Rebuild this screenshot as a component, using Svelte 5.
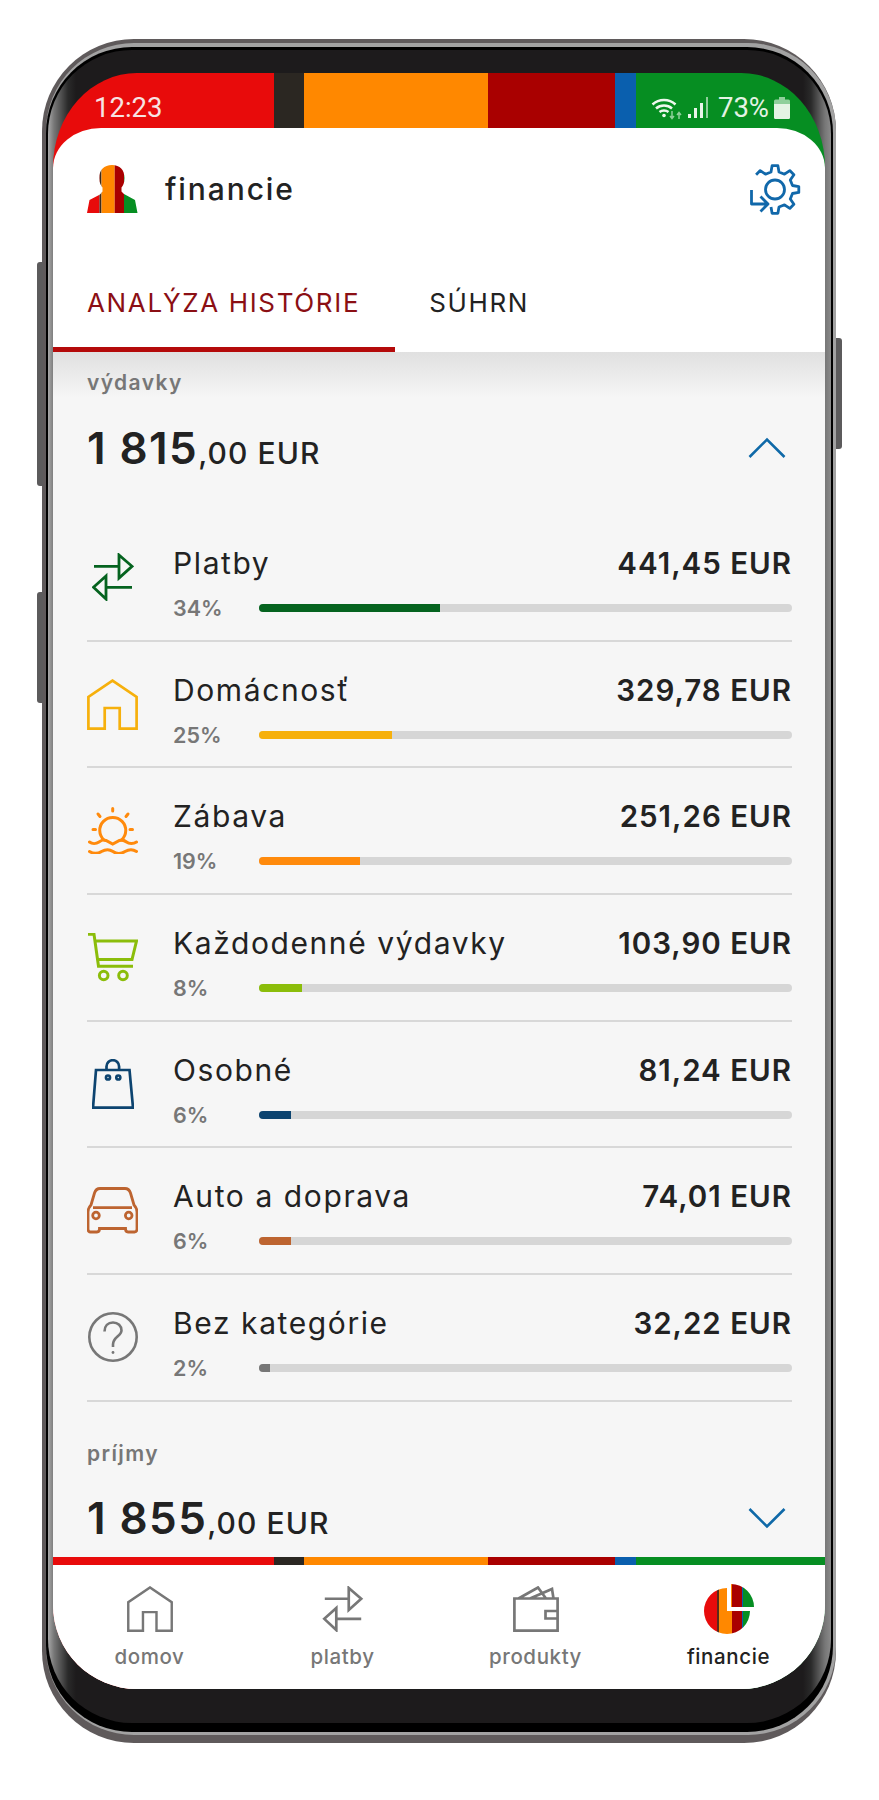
<script>
  // category rows, percent drives the bar width
  const rows = [
    { icon: 'transfer', name: 'Platby', amount: '441,45 EUR', pct: 34, color: '#05631f' },
    { icon: 'house', name: 'Domácnosť', amount: '329,78 EUR', pct: 25, color: '#f6b00c' },
    { icon: 'sun', name: 'Zábava', amount: '251,26 EUR', pct: 19, color: '#ff8a0c' },
    { icon: 'cart', name: 'Každodenné výdavky', amount: '103,90 EUR', pct: 8, color: '#8bbd0a' },
    { icon: 'bag', name: 'Osobné', amount: '81,24 EUR', pct: 6, color: '#0d4470' },
    { icon: 'car', name: 'Auto a doprava', amount: '74,01 EUR', pct: 6, color: '#bd6430' },
    { icon: 'help', name: 'Bez kategórie', amount: '32,22 EUR', pct: 2, color: '#777777' }
  ];

  const nav = [
    { icon: 'house', label: 'domov' },
    { icon: 'transfer', label: 'platby' },
    { icon: 'wallet', label: 'produkty' },
    { icon: 'pie', label: 'financie', active: true }
  ];

  // gear outline: 8 teeth, left lower part left open for the arrow
  function gearPath(cx, cy, rIn, rOut) {
    const pt = (deg, r) => {
      const a = (deg * Math.PI) / 180;
      return (cx + r * Math.sin(a)).toFixed(1) + ' ' + (cy - r * Math.cos(a)).toFixed(1);
    };
    const pts = [];
    for (let k = 7; k <= 12; k++) {
      const a = k * 45;
      pts.push(pt(a - 13, rIn), pt(a - 7, rOut), pt(a + 7, rOut), pt(a + 13, rIn));
    }
    pts.shift();
    return 'M' + pts.join('L');
  }
  const gear = gearPath(25, 25.5, 18, 24);
</script>

{#snippet icon(name)}
  {#if name === 'transfer'}
    <svg viewBox="0 0 42 48" width="42" height="48" fill="none" stroke="currentColor" stroke-width="2.8">
      <path d="M2 13.3H27M27 2L40 13.3 27 25ZM40 34.3H14M14 23L1.5 34.3 14 46Z" />
    </svg>
  {:else if name === 'house'}
    <svg viewBox="0 0 51 51" width="51" height="51" fill="none" stroke="currentColor" stroke-width="2.7">
      <path d="M17.7 49.7H1.4V18L25.5 1.6 49.6 18V49.7H32.7V29H17.7Z" />
    </svg>
  {:else if name === 'sun'}
    <svg viewBox="0 0 50 47" width="50" height="47" fill="none" stroke="currentColor" stroke-width="3" stroke-linecap="round">
      <path d="M16 33A13 13 0 1 1 33.5 33M24.7 1.5V4M10 7L12 9.5M40 7L38 9.5M5 22.5H7.5M42 22.5H44.5" />
      <path d="M1.5 35C4 37 8 37 11 35S15 32.5 18 33.5L24.7 37 31.5 33.5C34.5 32.5 36 33 38.5 35S45.5 37 48.5 35" />
      <path d="M1.5 44.5c4 2.4 8 2.4 12 0s8-2.4 11.5 0 8 2.4 12 0 8-2.4 11.5 0" />
    </svg>
  {:else if name === 'cart'}
    <svg viewBox="0 0 50 49" width="50" height="49" fill="none" stroke="currentColor" stroke-width="3">
      <path d="M0 1.3H6L10.5 33.3H45M6.8 8H48.5L44 26.5H9.5" />
      <circle cx="15.7" cy="42.5" r="4.3" />
      <circle cx="35" cy="42.5" r="4.3" />
    </svg>
  {:else if name === 'bag'}
    <svg viewBox="0 0 42 50" width="42" height="50" fill="none" stroke="currentColor" stroke-width="2.7">
      <path d="M4 11H37.5L41 48.7H1ZM14.5 11V7.5a6.3 6.3 0 0 1 12.6 0V11" />
      <circle cx="16" cy="18.5" r="2" />
      <circle cx="26.3" cy="18.5" r="2" />
    </svg>
  {:else if name === 'car'}
    <svg viewBox="0 0 51 47" width="51" height="47" fill="none" stroke="currentColor" stroke-width="2.8">
      <path d="M13 1.5H38C41 1.5 42.5 3 43.5 6L47 18C49 20 50 22 50 25V42C50 44 49 45 47.5 45H41C39.5 45 38.5 44 38.5 41.5H12.5C12.5 44 11.5 45 10 45H3.5C2 45 1 44 1 42V25C1 22 2 20 4 18L7.5 6C8.5 3 10 1.5 13 1.5ZM6 20.7H45" />
      <circle cx="9" cy="28.5" r="3.3" />
      <circle cx="41.7" cy="28.5" r="3.3" />
    </svg>
  {:else if name === 'help'}
    <svg viewBox="0 0 50 50" width="50" height="50" fill="none" stroke="currentColor" stroke-width="2.6">
      <circle cx="25" cy="25" r="23.7" />
      <path d="M16.5 19.5C16.5 14 20 10.5 25 10.5S33.5 14 33.5 18.5C33.5 24 25 25 25 32.5V35" />
      <circle cx="25" cy="40.5" r="1.4" fill="currentColor" stroke="none" />
    </svg>
  {:else if name === 'wallet'}
    <svg viewBox="0 0 46 46" width="46" height="46" fill="none" stroke="currentColor" stroke-width="2.7">
      <path d="M1.4 12.5H44.6V44.6H1.4ZM5.5 12.5L25 1.5 33 12.5M17 12.5L39 3 40.5 12.5M45 25H32.5V32.5H45" />
    </svg>
  {:else if name === 'pie'}
    <svg viewBox="0 0 50 50" width="50" height="50">
      <defs>
        <clipPath id="pieclip">
          <path d="M23 27V4A23 23 0 1 0 46 27ZM27 23V0A23 23 0 0 1 50 23Z" />
        </clipPath>
      </defs>
      <g clip-path="url(#pieclip)">
        <rect x="0" y="0" width="13" height="50" fill="#e80b0b" />
        <rect x="13" y="0" width="2" height="50" fill="#5b2a1a" />
        <rect x="15" y="0" width="13" height="50" fill="#ff8800" />
        <rect x="28" y="0" width="10" height="50" fill="#a90000" />
        <rect x="38" y="0" width="1" height="50" fill="#0a5fae" />
        <rect x="39" y="0" width="11" height="50" fill="#068e22" />
      </g>
    </svg>
  {/if}
{/snippet}

{#snippet total(big, rest, up)}
  <div class="total">
    <div><span class="big">{big}</span><span class="rest">{rest}</span></div>
    <svg class="chev" viewBox="0 0 38 22" width="38" height="22" fill="none" stroke="#0f69a8" stroke-width="2.6">
      {#if up}
        <path d="M1.5 20L19 2.5 36.5 20" />
      {:else}
        <path d="M1.5 2L19 19.5 36.5 2" />
      {/if}
    </svg>
  </div>
{/snippet}

<div class="page">
  <div class="phone">
    <span class="side left1"></span>
    <span class="side left2"></span>
    <span class="side right1"></span>
    <div class="rim">
      <div class="blackline">
        <div class="bezel">
          <div class="screen stripes">
            <div class="status">
              <span class="time">12:23</span>
              <span class="status-right">
                <svg viewBox="0 0 32 24" width="32" height="24" fill="none" stroke="#eef8ee" stroke-width="2.5">
                  <path d="M1.5 8.5C8 2.5 18 2.5 24.5 8.5M5 12.5C9.5 8.5 16.5 8.5 21 12.5M8.5 16C11 14 15 14 17.5 16" />
                  <circle cx="13" cy="19.5" r="1.8" fill="#eef8ee" stroke="none" />
                  <path d="M21 15V22M19 20L21 22.5 23 20" stroke="#8fcf9b" stroke-width="1.5" />
                  <path d="M28 23V17M26 19L28 16.5 30 19" stroke="#8fcf9b" stroke-width="1.5" />
                </svg>
                <svg class="signal" viewBox="0 0 20 22" width="20" height="22" fill="#e9f5e9">
                  <rect x="0" y="17" width="3" height="4" />
                  <rect x="6" y="11" width="3" height="10" />
                  <rect x="12" y="6" width="3" height="15" />
                  <rect x="18" y="0" width="2" height="21" fill="#8fcf9b" />
                </svg>
                <span class="batt-text">73%</span>
                <svg viewBox="0 0 16 22" width="16" height="22">
                  <path d="M5 0H11V2.5H14.5Q16 2.5 16 4V7H0V4Q0 2.5 1.5 2.5H5Z" fill="#8fcf9b" />
                  <path d="M0 7H16V20.5Q16 22 14.5 22H1.5Q0 22 0 20.5Z" fill="#e4f3e4" />
                </svg>
              </span>
            </div>

            <div class="card">
              <header class="brand">
                <div class="brand-left">
                  <svg viewBox="0 0 51 48" width="51" height="48">
                    <defs>
                      <clipPath id="person">
                        <path d="M25 0C33 0 37.5 5 37.5 13 37.5 18 36 21 34.5 22.5V26.5L37 29 48 35 50.5 48H0L2.5 35 13 29.5 15.5 26.5V22.5C14 21 12.3 18 12.3 13 12.3 5 17 0 25 0Z" />
                      </clipPath>
                    </defs>
                    <g clip-path="url(#person)">
                      <rect x="0" y="0" width="12.5" height="48" fill="#e80b0b" />
                      <rect x="12.5" y="0" width="2" height="48" fill="#3b2a1c" />
                      <rect x="14.5" y="0" width="13.2" height="48" fill="#ff8800" />
                      <rect x="27.7" y="0" width="9.3" height="48" fill="#a90000" />
                      <rect x="37" y="0" width="14" height="48" fill="#068e22" />
                    </g>
                  </svg>
                  <span class="title">financie</span>
                </div>
                <svg class="gear" viewBox="0 0 51 51" width="51" height="51" fill="none" stroke="#1168aa" stroke-width="2.8" stroke-linejoin="round">
                  <path d={gear} />
                  <circle cx="25" cy="25.5" r="9.5" />
                  <path d="M1.5 26V40H18M10.5 32.5L18 40 10.5 47.5" />
                </svg>
              </header>

              <nav class="tabs">
                <div class="tab active">ANALÝZA HISTÓRIE</div>
                <div class="tab">SÚHRN</div>
              </nav>

              <main class="content">
                <section class="sum first">
                  <div class="sum-label">výdavky</div>
                  {@render total('1 815', ',00 EUR', true)}
                </section>

                {#each rows as row}
                  <div class="row">
                    <div class="row-icon" style="color: {row.color}">{@render icon(row.icon)}</div>
                    <div class="row-body">
                      <div class="row-top">
                        <span class="name">{row.name}</span>
                        <span class="amount">{row.amount}</span>
                      </div>
                      <div class="row-bottom">
                        <span class="pct">{row.pct}%</span>
                        <div class="track">
                          <div class="fill" style="width: {row.pct}%; background: {row.color}"></div>
                        </div>
                      </div>
                    </div>
                  </div>
                {/each}

                <section class="sum second">
                  <div class="sum-label">príjmy</div>
                  {@render total('1 855', ',00 EUR', false)}
                </section>
              </main>

              <div class="stripes rule"></div>

              <footer class="bottom">
                {#each nav as item}
                  <div class="nav-item" class:on={item.active}>
                    <div class="nav-icon">{@render icon(item.icon)}</div>
                    <span>{item.label}</span>
                  </div>
                {/each}
              </footer>
            </div>
          </div>
        </div>
      </div>
    </div>
  </div>
</div>

<style>
  :global(body) {
    margin: 0;
    background: #fff;
  }

  .page {
    height: 1800px;
    padding: 39px 0 0 42px;
    box-sizing: border-box;
    font-family: Inter, "Open Sans", sans-serif;
    color: #222;
  }

  .phone {
    position: relative;
    width: 794px;
    height: 1704px;
    box-sizing: border-box;
    padding: 4px 0 8px 4px;
    border-radius: 92px;
    background: #5f5a5b;
  }

  .side {
    position: absolute;
    width: 6px;
    background: #5c5b5c;
  }
  .left1 { left: -5px; top: 223px; height: 224px; border-radius: 3px 0 0 3px; }
  .left2 { left: -5px; top: 553px; height: 111px; border-radius: 3px 0 0 3px; }
  .right1 { right: -6px; top: 299px; height: 111px; border-radius: 0 3px 3px 0; }

  .rim {
    height: 100%;
    box-sizing: border-box;
    padding: 4px 0 3px;
    border-radius: 88px;
    background: #a2a2a2;
  }

  .blackline {
    height: 100%;
    width: 787px;
    box-sizing: border-box;
    padding: 3px 2px 9px;
    border-radius: 86px;
    background: #000;
  }

  .bezel {
    height: 100%;
    box-sizing: border-box;
    padding: 23px 6px 34px 5px;
    border-radius: 84px;
    background: linear-gradient(90deg, #a8a8a8 0, #777 6px, #2a2a2a 20px, #1d1b1c 28px, #1d1b1c calc(100% - 28px), #2a2a2a calc(100% - 20px), #777 calc(100% - 6px), #8a8a8a 100%);
  }

  .screen {
    height: 1616px;
    border-radius: 84px 84px 84px 84px / 94px 94px 84px 84px;
    overflow: hidden;
    display: flex;
    flex-direction: column;
  }

  .stripes {
    background: linear-gradient(90deg, #e80b0b 0 221px, #2b2722 221px 251px, #ff8800 251px 435px, #a90000 435px 562px, #0a5fae 562px 583px, #068e22 583px);
  }

  .status {
    height: 55px;
    flex: none;
    box-sizing: border-box;
    padding: 14px 35px 0 41px;
    display: flex;
    justify-content: space-between;
    align-items: center;
    font-family: Roboto, sans-serif;
    font-size: 27.5px;
    line-height: 42px;
  }
  .time { color: #f7e3e3; }
  .status-right {
    display: flex;
    align-items: center;
    color: #e4f3e4;
  }
  .signal { margin-left: 5px; }
  .batt-text { margin: 0 5px 0 10px; }

  .card {
    flex: 1;
    display: flex;
    flex-direction: column;
    min-height: 0;
    background: #fff;
    border-radius: 48px 48px 0 0 / 40px 40px 0 0;
  }

  .brand {
    height: 122px;
    flex: none;
    box-sizing: border-box;
    padding: 0 24px 0 34px;
    display: flex;
    justify-content: space-between;
    align-items: center;
  }
  .brand-left {
    display: flex;
    align-items: center;
    gap: 27px;
  }
  .title {
    font-size: 30px;
    font-weight: 500;
    letter-spacing: 1.9px;
  }

  .tabs {
    display: flex;
    height: 102px;
    flex: none;
  }
  .tab {
    box-sizing: border-box;
    padding: 7px 35px 0 34px;
    display: flex;
    align-items: center;
    font-size: 26px;
    letter-spacing: 1.65px;
    border-bottom: 5px solid transparent;
  }
  .tab.active {
    color: #8b0f14;
    border-bottom-color: #b40a0a;
  }

  .content {
    flex: 1;
    min-height: 0;
    overflow: hidden;
    box-sizing: border-box;
    padding: 0 33px 0 34px;
    background: linear-gradient(#e0e0e0, #f6f6f6 46px);
  }

  .sum.first {
    padding: 18px 0 38px;
    height: 163px;
    box-sizing: border-box;
  }
  .sum.second {
    padding-top: 39px;
  }
  .sum-label {
    font-size: 21px;
    line-height: 26px;
    font-weight: 600;
    color: #777;
    letter-spacing: 1.4px;
  }
  .sum.first .total { margin-top: 24px; }
  .sum.second .total { margin-top: 23px; }

  .total {
    height: 56px;
    display: flex;
    justify-content: space-between;
    align-items: center;
  }
  .big {
    font-size: 44px;
    font-weight: 600;
    letter-spacing: 1.4px;
  }
  .rest {
    font-size: 30px;
    font-weight: 500;
    letter-spacing: 1.1px;
  }
  .chev {
    margin-right: 6px;
  }

  .row {
    height: 126.7px;
    box-sizing: border-box;
    display: flex;
    border-bottom: 2px solid #d8d8d8;
  }
  .row-icon {
    width: 86px;
    flex: none;
    box-sizing: border-box;
    padding-right: 35px;
    display: flex;
    justify-content: center;
    align-items: center;
  }
  .row-icon svg {
    display: block;
    flex: none;
  }
  .row-body {
    flex: 1;
    padding-top: 30px;
    box-sizing: border-box;
  }
  .row-top {
    height: 36px;
    display: flex;
    justify-content: space-between;
    align-items: center;
  }
  .name {
    font-size: 30px;
    letter-spacing: 1.6px;
  }
  .amount {
    font-size: 29.5px;
    font-weight: 600;
    letter-spacing: 1px;
  }
  .row-bottom {
    margin-top: 13px;
    height: 28px;
    display: flex;
    align-items: center;
  }
  .pct {
    width: 86px;
    flex: none;
    font-size: 21.5px;
    font-weight: 600;
    color: #777;
  }
  .track {
    flex: 1;
    height: 8px;
    border-radius: 4px;
    background: #d6d6d6;
    overflow: hidden;
  }
  .fill {
    height: 100%;
  }

  .rule {
    height: 8px;
    flex: none;
  }

  .bottom {
    height: 124px;
    flex: none;
    display: grid;
    grid-template-columns: repeat(4, 1fr);
    background: #fff;
  }
  .nav-item {
    display: flex;
    flex-direction: column;
    align-items: center;
    color: #777;
    font-size: 20.5px;
    font-weight: 500;
    line-height: 26px;
    letter-spacing: 0.6px;
    padding-top: 19px;
    box-sizing: border-box;
  }
  .nav-item.on {
    color: #222;
  }
  .nav-icon {
    height: 50px;
    display: flex;
    align-items: center;
    justify-content: center;
    margin-bottom: 10px;
  }
  .nav-icon svg {
    display: block;
    width: 46px;
    height: 46px;
  }
  .nav-item.on .nav-icon svg {
    width: 50px;
    height: 50px;
  }
</style>
